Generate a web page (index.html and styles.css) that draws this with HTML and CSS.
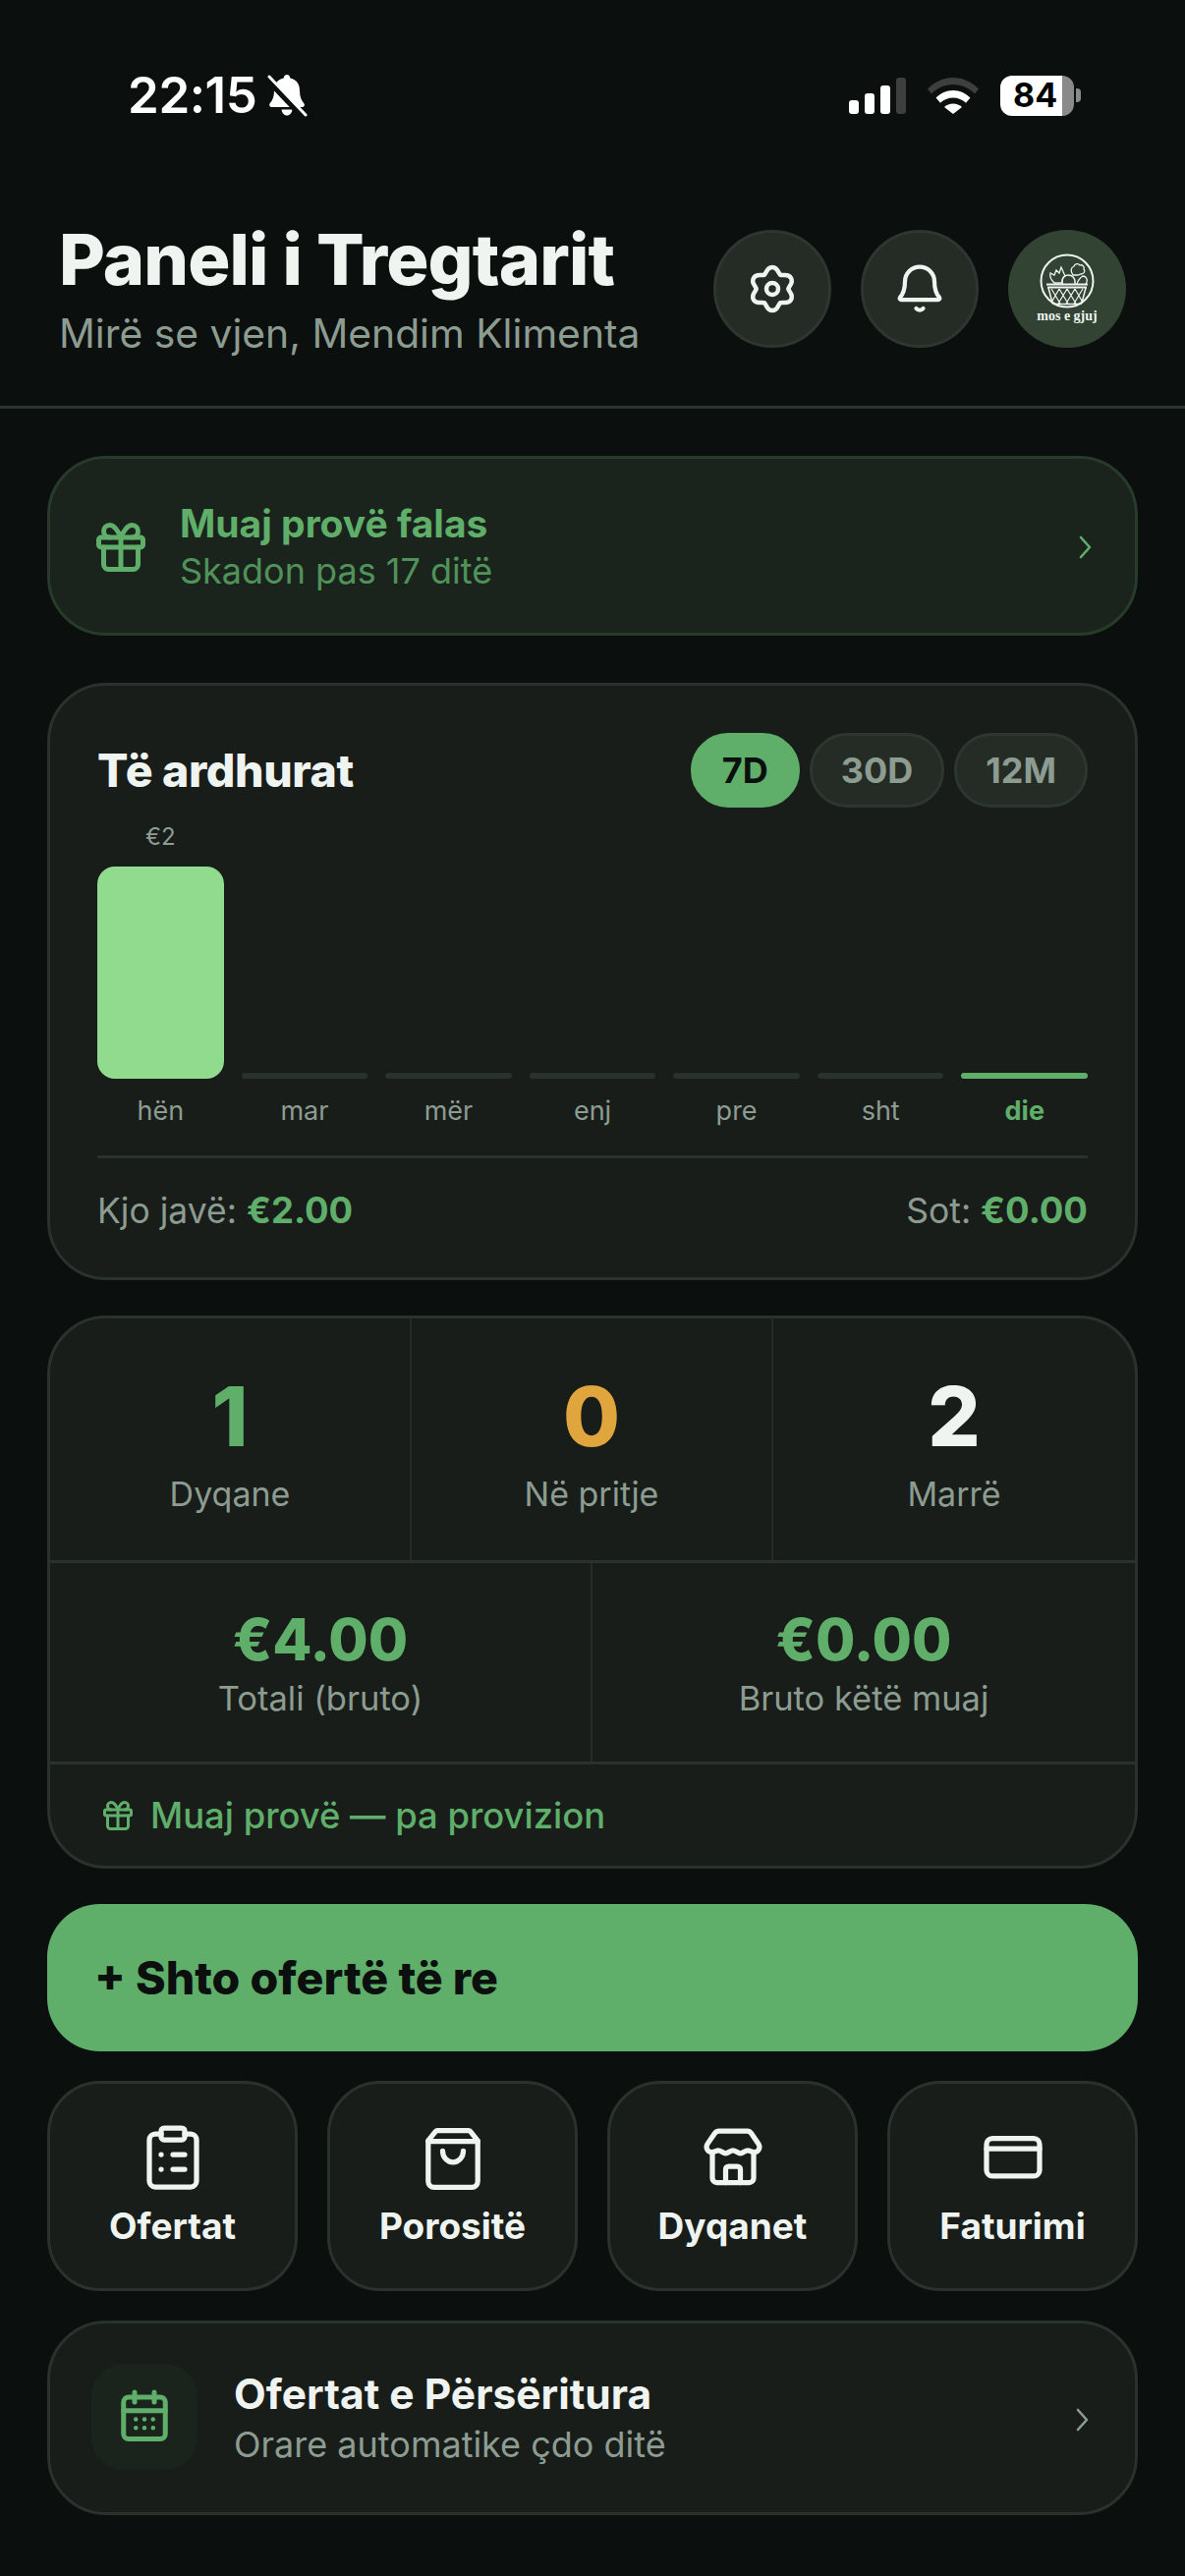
FILE: index.html
```html
<!DOCTYPE html>
<html lang="sq">
<head>
<meta charset="utf-8">
<title>Paneli i Tregtarit</title>
<link rel="stylesheet" href="styles.css">
</head>
<body>
<div class="statusbar">
  <div class="status-left">
    <span class="time">22:15</span>
    <svg class="bell-off" viewBox="0 0 42 44" width="42" height="44">
      <path d="M21 1c2 0 3 1.500 3.300 3.500C31 6 34 11 34 17c0 6 1.500 10 4.500 13.500 1 1.500 0 3.500-2 3.500H5.500c-2 0-3-2-2-3.500C6.500 27 8 23 8 17c0-6 3-11 9.700-12.500C18 2.500 19 1 21 1z" fill="#fff"/>
      <path d="M15.500 36.500h11c-.5 3.500-2.500 6-5.500 6s-5-2.500-5.500-6z" fill="#fff"/>
      <path d="M0 4 38 44" stroke="#0b0f0e" stroke-width="7"/>
      <path d="M3 3 40 42" stroke="#fff" stroke-width="3" stroke-linecap="round"/>
    </svg>
  </div>
  <div class="status-right">
    <svg class="signal" viewBox="0 0 58 37" width="58" height="37">
      <rect x="0" y="23" width="10" height="14" rx="3" fill="#fff"/>
      <rect x="16" y="16" width="10" height="21" rx="3" fill="#fff"/>
      <rect x="32" y="8" width="10" height="29" rx="3" fill="#fff"/>
      <rect x="48" y="0" width="10" height="37" rx="3" fill="#3c3f3d"/>
    </svg>
    <svg class="wifi" viewBox="0 0 52 37" width="52" height="37">
      <path d="M0 11.500C7 4.500 16 0 26 0s19 4.500 26 11.500l-4 5C42 10.500 34.500 7 26 7S10 10.500 4 16.500z" fill="#3c3f3d"/>
      <path d="M8.500 20.500C13 16 19 13 26 13s13 3 17.500 7.500l-4.500 5.300C35.500 22.500 31 20.500 26 20.500s-9.500 2-13 5.300z" fill="#fff"/>
      <path d="M17 30c2.300-2.200 5.500-3.500 9-3.500s6.700 1.300 9 3.500l-9 7z" fill="#fff"/>
    </svg>
    <div class="battery"><span>84</span></div>
    <div class="battery-nub"></div>
  </div>
</div>

<header class="header">
  <div class="header-text">
    <h1>Paneli i Tregtarit</h1>
    <p>Mirë se vjen, Mendim Klimenta</p>
  </div>
  <div class="header-actions">
    <div class="round-btn">
      <svg viewBox="-30 -30 60 60" width="60" height="60" fill="none" stroke="#eff4f0" stroke-width="4.500" stroke-linecap="round">
        <g id="lobe"><path d="M-8.250-14.290C-5.650-15.790-6-22 0-22C6-22 5.650-15.790 8.250-14.290"/></g>
        <use href="#lobe" transform="rotate(60)"/>
        <use href="#lobe" transform="rotate(120)"/>
        <use href="#lobe" transform="rotate(180)"/>
        <use href="#lobe" transform="rotate(240)"/>
        <use href="#lobe" transform="rotate(300)"/>
        <circle r="6" />
      </svg>
    </div>
    <div class="round-btn">
      <svg viewBox="0 0 24 24" width="60" height="60" fill="none" stroke="#eff4f0" stroke-width="1.700" stroke-linecap="round" stroke-linejoin="round">
        <path d="M12 3a6 6 0 0 0-6 6c0 3-.5 4.800-2 6.500-.3.400-.1.900.4.900h15.200c.5 0 .7-.5.400-.9-1.500-1.700-2-3.500-2-6.500a6 6 0 0 0-6-6z"/>
        <path d="M10.600 20a1.800 1.800 0 0 0 2.800 0"/>
      </svg>
    </div>
    <div class="round-btn avatar">
      <svg viewBox="0 0 120 120" width="120" height="120" fill="none" stroke="#eff4f0">
        <circle cx="60" cy="52" r="26.500" stroke-width="2"/>
        <path d="M39 55.500h42M40 58.500h40" stroke-width="2"/>
        <path d="M41 59l4 15c.3 1 1 1.500 2 1.500h26c1 0 1.700-.5 2-1.500l4-15" stroke-width="1.500"/>
        <path d="M44 60l9 15M52 60l9 15M60 60l9 15M68 60l8 14M76 60l-9 15M68 60l-9 15M60 60l-9 15M52 60l-8 14" stroke-width="1.200"/>
        <path d="M47 54c-3-3-5-7-4-10l4 2 2-5 3 3 2-6 4 9c-2 1-3 3-3 7z" stroke-width="1.300"/>
        <path d="M55 55c-1-6 2-9 6-9s8 3 7 9" stroke-width="1.300"/>
        <path d="M66 46c-3-4-2-8 1-9 1-3 5-3 6-1 3-1 5 2 4 4 2 2 0 5-3 5l-3 1z" stroke-width="1.300"/>
        <path d="M70 55c1-4 3-6 6-8 3 0 5 3 4 6l-1 2" stroke-width="1.300"/>
        <text class="logo-text" x="60" y="92" text-anchor="middle">mos e gjuj</text>
      </svg>
    </div>
  </div>
</header>

<main class="main">
  <section class="card trial">
    <svg class="icon-60" viewBox="0 0 24 24" fill="none" stroke="#5fae6a" stroke-width="2" stroke-linecap="round" stroke-linejoin="round">
      <rect x="3" y="8" width="18" height="4" rx="1"/>
      <path d="M12 8v13"/>
      <path d="M19 12v7a2 2 0 0 1-2 2H7a2 2 0 0 1-2-2v-7"/>
      <path d="M7.500 8a2.500 2.500 0 0 1 0-5C10 3 12 8 12 8s2-5 4.500-5a2.500 2.500 0 0 1 0 5"/>
    </svg>
    <div class="trial-text">
      <div class="trial-title">Muaj provë falas</div>
      <div class="trial-sub">Skadon pas 17 ditë</div>
    </div>
    <svg class="chevron" viewBox="0 0 16 24" width="16" height="24" fill="none" stroke="#5fae6a" stroke-width="2.600" stroke-linecap="round" stroke-linejoin="round"><path d="M3 2l9 10-9 10"/></svg>
  </section>

  <section class="card revenue">
    <div class="rev-head">
      <h2>Të ardhurat</h2>
      <div class="pills">
        <span class="pill pill-on">7D</span>
        <span class="pill">30D</span>
        <span class="pill">12M</span>
      </div>
    </div>
    <div class="chart">
      <div class="col"><span class="bar-val">€2</span><div class="bar bar-full"></div><span class="day">hën</span></div>
      <div class="col"><div class="bar"></div><span class="day">mar</span></div>
      <div class="col"><div class="bar"></div><span class="day">mër</span></div>
      <div class="col"><div class="bar"></div><span class="day">enj</span></div>
      <div class="col"><div class="bar"></div><span class="day">pre</span></div>
      <div class="col"><div class="bar"></div><span class="day">sht</span></div>
      <div class="col"><div class="bar bar-today"></div><span class="day day-today">die</span></div>
    </div>
    <div class="rev-foot">
      <span>Kjo javë: <b>€2.00</b></span>
      <span>Sot: <b>€0.00</b></span>
    </div>
  </section>

  <section class="card stats">
    <div class="stats-row3">
      <div class="stat"><div class="num green">1</div><div class="lbl">Dyqane</div></div>
      <div class="stat"><div class="num amber">0</div><div class="lbl">Në pritje</div></div>
      <div class="stat"><div class="num white">2</div><div class="lbl">Marrë</div></div>
    </div>
    <div class="stats-row2">
      <div class="stat2"><div class="money">€4.00</div><div class="lbl">Totali (bruto)</div></div>
      <div class="stat2"><div class="money">€0.00</div><div class="lbl">Bruto këtë muaj</div></div>
    </div>
    <div class="stats-foot">
      <svg viewBox="0 0 24 24" width="36" height="36" fill="none" stroke="#5fae6a" stroke-width="2" stroke-linecap="round" stroke-linejoin="round">
        <rect x="3" y="8" width="18" height="4" rx="1"/>
        <path d="M12 8v13"/>
        <path d="M19 12v7a2 2 0 0 1-2 2H7a2 2 0 0 1-2-2v-7"/>
        <path d="M7.500 8a2.500 2.500 0 0 1 0-5C10 3 12 8 12 8s2-5 4.500-5a2.500 2.500 0 0 1 0 5"/>
      </svg>
      <span>Muaj provë — pa provizion</span>
    </div>
  </section>

  <div class="cta">+ Shto ofertë të re</div>

  <nav class="tiles">
    <div class="card tile">
      <svg class="icon-72" viewBox="0 0 24 24"><rect x="8" y="2" width="8" height="4" rx="1"/><path d="M16 4h2a2 2 0 0 1 2 2v14a2 2 0 0 1-2 2H6a2 2 0 0 1-2-2V6a2 2 0 0 1 2-2h2"/><path d="M12 11h4M12 16h4M8 11h.01M8 16h.01"/></svg>
      <span>Ofertat</span>
    </div>
    <div class="card tile">
      <svg class="icon-72" viewBox="0 0 24 24"><path d="M6.800 2.900h10.400a1 1 0 0 1 .8.400l2.400 3v13.800a2 2 0 0 1-2 2H5.600a2 2 0 0 1-2-2V6.300l2.400-3a1 1 0 0 1 .8-.4z"/><path d="M3.600 6.500h16.800"/><path d="M8.500 9.800a3.500 3.800 0 0 0 7 0"/></svg>
      <span>Porositë</span>
    </div>
    <div class="card tile">
      <svg class="icon-72" viewBox="0 0 24 24"><path d="M7.200 3h9.600c.5 0 1 .3 1.300.7l2.500 3.600c.8 1.200.2 2.700-1.100 2.900-1 .2-1.800-.6-2.500-.6-.9 0-1.600 1-2.500 1s-1.600-1-2.500-1-1.600 1-2.500 1-1.600-1-2.500-1c-.7 0-1.500.8-2.500.6-1.300-.2-1.900-1.700-1.100-2.900l2.500-3.600c.3-.4.8-.7 1.300-.7z"/><path d="M5 11v8a1.500 1.500 0 0 0 1.500 1.500h11A1.500 1.500 0 0 0 19 19v-8"/><path d="M9.500 20.500V16a1 1 0 0 1 1-1h3a1 1 0 0 1 1 1v4.500"/></svg>
      <span>Dyqanet</span>
    </div>
    <div class="card tile">
      <svg class="icon-72" viewBox="0 0 24 24"><rect x="3" y="5.500" width="18" height="12.800" rx="2"/><path d="M3 9h18"/></svg>
      <span>Faturimi</span>
    </div>
  </nav>

  <section class="card recurring">
    <div class="cal-box">
      <svg class="icon-60" viewBox="0 0 24 24" fill="none" stroke="#5fae6a" stroke-width="2" stroke-linecap="round" stroke-linejoin="round">
        <rect x="3.500" y="4" width="17" height="17" rx="2"/>
        <path d="M8 2v4M16 2v4M3.500 9.500h17"/>
        <path d="M8.500 13h.01M12 13h.01M15.500 13h.01M8.500 16.500h.01M12 16.500h.01M15.500 16.500h.01" stroke-width="1.800"/>
      </svg>
    </div>
    <div class="rec-text">
      <div class="rec-title">Ofertat e Përsëritura</div>
      <div class="rec-sub">Orare automatike çdo ditë</div>
    </div>
    <svg class="chevron" viewBox="0 0 16 24" width="16" height="24" fill="none" stroke="#8d9c91" stroke-width="2.600" stroke-linecap="round" stroke-linejoin="round"><path d="M3 2l9 10-9 10"/></svg>
  </section>
</main>
</body>
</html>
```
FILE: styles.css
```css
* { box-sizing: border-box; }
html, body { margin: 0; padding: 0; }
body {
  width: 1206px;
  height: 2622px;
  background: #0b0f0e;
  color: #eff4f0;
  font-family: Inter, "Noto Sans", sans-serif;
  overflow: hidden;
}
h1, h2, p { margin: 0; }

.statusbar {
  height: 195px;
  padding: 76px 106px 0 130px;
  display: flex;
  justify-content: space-between;
  align-items: flex-start;
}
.status-left { display: flex; align-items: center; gap: 10px; height: 42px; }
.time { font-size: 51px; font-weight: 600; color: #fff; line-height: 42px; letter-spacing: -.4px; }
.status-right { display: flex; align-items: center; height: 42px; }
.wifi { margin-left: 22px; }
.battery {
  margin-left: 22px;
  width: 75px;
  height: 41px;
  border-radius: 12px;
  background: linear-gradient(90deg, #fff 84%, #8a8a8a 84%);
  display: flex;
  align-items: center;
  padding-left: 13px;
}
.battery span { font-size: 34px; font-weight: 700; color: #000; line-height: 1; }
.battery-nub { width: 5px; height: 14px; margin-left: 2px; background: #8a8a8a; border-radius: 0 4px 4px 0; }

.header {
  height: 221px;
  padding: 27px 60px 0 60px;
  border-bottom: 3px solid #2c352e;
  display: flex;
  justify-content: space-between;
  align-items: flex-start;
}
.header-text h1 { font-size: 72px; font-weight: 800; line-height: 84px; letter-spacing: -.85px; color: #eff4f0; }
.header-text p { font-size: 40.800px; line-height: 54px; margin-top: 6px; color: #8d9c91; }
.header-actions { display: flex; gap: 30px; margin-top: 12px; }
.round-btn {
  width: 120px;
  height: 120px;
  border-radius: 50%;
  background: #252c26;
  border: 3px solid #2e3630;
  display: flex;
  align-items: center;
  justify-content: center;
}
.avatar { background: #324334; border: 0; }
.logo-text { font-family: "Liberation Serif", serif; font-size: 14px; font-weight: 700; fill: #eff4f0; stroke: none; }

.main { padding: 48px 48px 0; display: flex; flex-direction: column; }
.card { background: #181d1a; border: 3px solid #2a322c; border-radius: 60px; }

.trial {
  height: 183px;
  margin-bottom: 48px;
  padding: 3px 42px 0;
  display: flex;
  align-items: center;
  background: #1a241c;
  border-color: #283b2b;
}
.icon-60 { width: 60px; height: 60px; flex: none; }
.trial-text { margin-left: 30px; flex: 1; }
.trial-title { font-size: 39px; font-weight: 700; line-height: 48px; color: #5fae6a; }
.trial-sub { font-size: 36px; line-height: 48px; color: #5fae6a; opacity: .8; }
.chevron { flex: none; }

.revenue { height: 608px; margin-bottom: 36px; padding: 48px 48px 0; }
.rev-head { display: flex; justify-content: space-between; align-items: center; height: 76px; }
.rev-head h2 { font-size: 46.500px; font-weight: 800; color: #eff4f0; letter-spacing: -.4px; }
.pills { display: flex; gap: 10px; }
.pill {
  height: 76px;
  padding: 0 29px;
  border-radius: 38px;
  background: #252c26;
  border: 3px solid #2e3630;
  color: #8d9c91;
  font-size: 36px;
  font-weight: 700;
  display: flex;
  align-items: center;
}
.pill-on { background: #5fae6a; border-color: #5fae6a; color: #0b0f0e; }

.chart { height: 315px; margin-top: 12px; display: flex; gap: 18px; align-items: flex-end; }
.col { flex: 1; display: flex; flex-direction: column; align-items: stretch; text-align: center; }
.bar-val { font-size: 24px; line-height: 36px; color: #8d9c91; margin-bottom: 12px; }
.bar { height: 6px; background: #2a322c; border-radius: 3px; }
.bar-full { height: 216px; background: #90db8e; border-radius: 18px; }
.bar-today { background: #5fae6a; }
.day { font-size: 27px; line-height: 36px; margin-top: 15px; color: #8d9c91; height: 36px; }
.day-today { color: #5fae6a; font-weight: 700; }

.rev-foot {
  margin-top: 27px;
  border-top: 3px solid #2a322c;
  padding-top: 29px;
  display: flex;
  justify-content: space-between;
  font-size: 35.500px;
  line-height: 48px;
  color: #8d9c91;
}
.rev-foot b { color: #5fae6a; font-weight: 700; font-size: 36.500px; }

.stats { height: 563px; margin-bottom: 36px; overflow: hidden; display: flex; flex-direction: column; }
.stats-row3 { display: grid; grid-template-columns: 1fr 1fr 1fr; border-bottom: 3px solid #2a322c; height: 249px; }
.stats-row2 { display: grid; grid-template-columns: 1fr 1fr; border-bottom: 3px solid #2a322c; height: 205px; }
.stat { padding-top: 52px; text-align: center; }
.stat:not(:last-child), .stat2:not(:last-child) { border-right: 2px solid #262d28; }
.stat2 { padding-top: 42px; text-align: center; }
.num { font-size: 84px; font-weight: 800; line-height: 96px; }
.money { font-size: 58.500px; font-weight: 800; line-height: 72px; color: #5fae6a; }
.lbl { font-size: 34px; line-height: 48px; color: #8d9c91; margin-top: 7px; }
.stat2 .lbl { font-size: 34.500px; margin-top: 0; }
.green { color: #5fae6a; }
.amber { color: #e0a53c; }
.white { color: #eff4f0; }
.stats-foot { flex: 1; padding: 0 0 0 51px; display: flex; align-items: center; gap: 15px; font-size: 36.400px; font-weight: 500; color: #5fae6a; }

.cta {
  height: 150px;
  margin-bottom: 30px;
  border-radius: 54px;
  background: #5fae6a;
  color: #0b0f0e;
  font-size: 46.500px;
  font-weight: 800;
  padding-left: 48px;
  display: flex;
  align-items: center;
}

.tiles { display: grid; grid-template-columns: repeat(4, 1fr); gap: 30px; margin-bottom: 30px; }
.tile {
  height: 214px;
  border-radius: 54px;
  padding-top: 39px;
  display: flex;
  flex-direction: column;
  align-items: center;
  font-size: 37px;
  font-weight: 700;
  line-height: 48px;
}
.tile span { margin-top: 10px; }
.icon-72 { width: 72px; height: 72px; fill: none; stroke: #eff4f0; stroke-width: 1.750; stroke-linecap: round; stroke-linejoin: round; }

.recurring {
  height: 198px;
  padding: 3px 45px 0 42px;
  display: flex;
  align-items: center;
}
.cal-box {
  width: 108px;
  height: 108px;
  flex: none;
  border-radius: 33px;
  background: #1a241c;
  display: flex;
  align-items: center;
  justify-content: center;
  margin-top: -6px;
}
.rec-text { margin-left: 37px; flex: 1; margin-top: -3px; }
.rec-title { font-size: 42.500px; font-weight: 700; line-height: 54px; color: #eff4f0; }
.rec-sub { font-size: 36px; line-height: 48px; color: #8d9c91; }
```
